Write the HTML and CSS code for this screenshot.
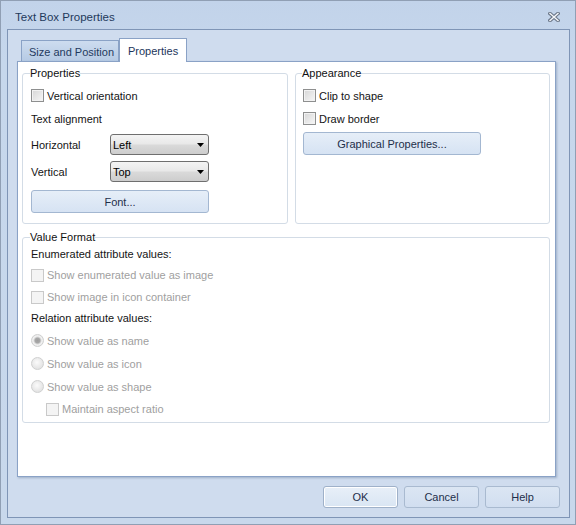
FILE: index.html
```html
<!DOCTYPE html>
<html lang="en">
<head>
    <meta charset="UTF-8">
    <title>Text Box Properties</title>
    <link rel="stylesheet" href="styles.css">
</head>
<body>
<div class="window">
    <div class="titlebar">
        <span class="title">Text Box Properties</span>
        <svg class="close" width="12" height="10" viewBox="0 0 12 10">
            <path d="M2 1.5 L10 8.5 M10 1.5 L2 8.5" stroke="#6b7789" stroke-width="3.6" stroke-linecap="square"/>
            <path d="M2 1.5 L10 8.5 M10 1.5 L2 8.5" stroke="#f5f7fa" stroke-width="1.4" stroke-linecap="square"/>
        </svg>
    </div>
    <div class="frame">
        <div class="tabs">
            <div class="tab">Size and Position</div>
            <div class="tab current">Properties</div>
        </div>
        <div class="panel">
            <div class="top-groups">
                <fieldset class="group">
                    <legend>Properties</legend>
                    <div class="row"><span class="check"></span>Vertical orientation</div>
                    <div class="row">Text alignment</div>
                    <div class="field first">
                        <span class="field-label">Horizontal</span>
                        <div class="combo">Left<svg class="arrow" width="7" height="4" viewBox="0 0 7 4"><polygon points="0,0 7,0 3.5,4" fill="#000"/></svg></div>
                    </div>
                    <div class="field">
                        <span class="field-label">Vertical</span>
                        <div class="combo">Top<svg class="arrow" width="7" height="4" viewBox="0 0 7 4"><polygon points="0,0 7,0 3.5,4" fill="#000"/></svg></div>
                    </div>
                    <button class="btn font-btn">Font...</button>
                </fieldset>
                <fieldset class="group appearance">
                    <legend>Appearance</legend>
                    <div class="row"><span class="check"></span>Clip to shape</div>
                    <div class="row"><span class="check"></span>Draw border</div>
                    <button class="btn graph-btn">Graphical Properties...</button>
                </fieldset>
            </div>
            <fieldset class="group value-format">
                <legend>Value Format</legend>
                <div class="vf-label">Enumerated attribute values:</div>
                <div class="vf-row off"><span class="check"></span>Show enumerated value as image</div>
                <div class="vf-row off"><span class="check"></span>Show image in icon container</div>
                <div class="vf-label second">Relation attribute values:</div>
                <div class="vf-row radio-row off"><span class="radio checked"></span>Show value as name</div>
                <div class="vf-row radio-row off"><span class="radio"></span>Show value as icon</div>
                <div class="vf-row radio-row off"><span class="radio"></span>Show value as shape</div>
                <div class="vf-row off indent"><span class="check"></span>Maintain aspect ratio</div>
            </fieldset>
        </div>
        <div class="actions">
            <button class="btn dlg focus">OK</button>
            <button class="btn dlg">Cancel</button>
            <button class="btn dlg">Help</button>
        </div>
    </div>
</div>
</body>
</html>
```

FILE: styles.css
```css
*{
    margin: 0;
    padding: 0;
}
body{
    margin: 0;
    font: 11px "Liberation Sans", Arial, sans-serif;
    color: #141414;
    background-color: #c4d5ea;
}
.window{
    width: 576px;
    height: 525px;
    box-sizing: border-box;
    border: 1px solid #909fb4;
    background: linear-gradient(#c2d3ea, #c6d7ec 60px, #c8d8ec);
    display: flex;
    flex-direction: column;
}
.titlebar{
    height: 28px;
    box-sizing: border-box;
    padding: 4px 15px 0 14px;
    display: flex;
    align-items: center;
    justify-content: space-between;
}
.title{
    font-size: 11.5px;
    color: #1e395b;
}
.close{
    display: block;
}

/* inner dialog frame */
.frame{
    height: 489px;
    box-sizing: border-box;
    margin: 0 5px 0 6px;
    border: 1px solid #7f95b6;
    background-color: #cfdcee;
    padding: 8px 0 9px;
    display: flex;
    flex-direction: column;
}
.tabs{
    height: 23px;
    padding-left: 13px;
    display: flex;
    align-items: flex-end;
}
.tab{
    box-sizing: border-box;
    width: 98px;
    height: 21px;
    padding: 2px 0 0 7px;
    line-height: 18px;
    color: #1f3a5e;
    border: 1px solid #8aa2c6;
    border-bottom: none;
    background: linear-gradient(#cddcef, #b6cae4);
}
.tab.current{
    position: relative;
    z-index: 1;
    width: 68px;
    height: 24px;
    margin-bottom: -1px;
    padding: 3px 0 2px 8px;
    color: #1c355a;
    border-left-color: #8aa2c6;
    background: #fff;
}
.panel{
    height: 416px;
    box-sizing: border-box;
    margin: 0 13px 0 9px;
    padding: 5px 5px 0 4px;
    border: 1px solid #8aa2c6;
    background-color: #fff;
    box-shadow: 1px 1px 2px rgba(70, 95, 130, 0.35);
}
.top-groups{
    display: grid;
    grid-template-columns: 266px 255px;
    column-gap: 7px;
}
.group{
    min-width: 0;
    border: 1px solid #d3dce6;
    border-radius: 3px;
    padding: 4px 8px 10px;
}
.group legend{
    line-height: 13px;
    margin-left: -1px;
    color: #111;
}
.appearance{
    padding-left: 7px;
}
.row{
    height: 23px;
    display: flex;
    align-items: center;
}
.field{
    height: 21px;
    margin-top: 6px;
    display: flex;
    align-items: center;
}
.field.first{
    margin-top: 4px;
}
.field-label{
    width: 79px;
}
.combo{
    box-sizing: border-box;
    width: 99px;
    height: 21px;
    padding: 0 4px 0 2px;
    border: 1px solid #6f6f6f;
    border-radius: 3px;
    background: linear-gradient(#f4f4f4, #e9e9e9 45%, #d9d9d9 55%, #cdcdcd);
    color: #000;
    display: flex;
    align-items: center;
    justify-content: space-between;
}
.arrow{
    display: block;
}

/* check boxes and radio buttons */
.check{
    box-sizing: border-box;
    width: 13px;
    height: 13px;
    margin-right: 3px;
    border: 1px solid #8e8f8f;
    background: linear-gradient(135deg, #d6d6d6, #f7f7f7);
    box-shadow: inset 0 0 0 1px #f2f2f2;
}
.radio{
    box-sizing: border-box;
    width: 13px;
    height: 13px;
    margin-right: 3px;
    border-radius: 50%;
    border: 1px solid #cfd0d0;
    background: radial-gradient(circle at 45% 40%, #fbfbfb, #e4e4e4 70%);
}
.radio.checked{
    background: radial-gradient(circle, #9e9e9e 0, #a8a8a8 2.5px, #d8d8d8 3.5px, #f3f3f3 4.5px, #e6e6e6 6px);
}
.off{
    color: #a0a0a0;
}
.off .check{
    border-color: #c9c9c9;
    background: #f4f4f4;
    box-shadow: none;
}

/* buttons */
.btn{
    box-sizing: border-box;
    font: inherit;
    color: #1e2f4a;
    border: 1px solid #a3b7d1;
    border-radius: 3px;
    background: linear-gradient(#e6eef8, #d6e3f3);
    text-align: center;
}
.font-btn{
    display: block;
    width: 178px;
    height: 23px;
    margin-top: 8px;
}
.graph-btn{
    display: block;
    width: 178px;
    height: 23px;
    margin-top: 2px;
}
.value-format{
    margin-top: 7px;
    padding: 0 8px 2px;
}
.vf-label{
    height: 20px;
    line-height: 20px;
}
.vf-label.second{
    height: 21px;
    line-height: 21px;
}
.vf-row{
    height: 22px;
    display: flex;
    align-items: center;
}
.radio-row{
    height: 23px;
}
.indent{
    padding-left: 15px;
}
.actions{
    margin-top: 9px;
    padding-right: 9px;
    display: flex;
    justify-content: flex-end;
    gap: 6px;
}
.dlg{
    width: 75px;
    height: 22px;
    border-color: #a9bad0;
    background: linear-gradient(#dbe6f3, #d1def0);
}
.dlg.focus{
    border-color: #9fb1c9;
    background: linear-gradient(#e8eff8, #d9e5f3);
    box-shadow: inset 0 0 0 1px #ffffff;
}
```
